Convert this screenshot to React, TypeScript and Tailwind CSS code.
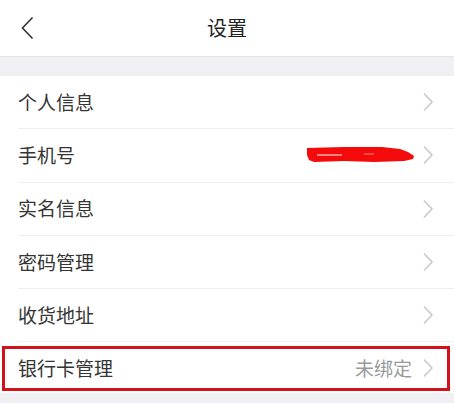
import { ReactNode } from "react";

const rows = ["个人信息", "手机号", "实名信息", "密码管理", "收货地址"];

function Chevron() {
  return (
    <svg width="12" height="20" viewBox="0 0 12 20" className="shrink-0">
      <path d="M2 1.5 L10 10 L2 18.5" fill="none" stroke="#c8c8cc" strokeWidth="1.5" />
    </svg>
  );
}

function Scribble() {
  return (
    <svg width="114" height="20" viewBox="0 0 114 20" className="shrink-0">
      <path
        d="M3 3 L40 2 L78 2 L96 4 L104 7 L110 11 L109 14 L100 16 L70 17 L40 16 L10 17 L5 15 L3 10 Z"
        fill="#f40a0a"
      />
      <path d="M13 10 L38 10" stroke="#fff" strokeWidth="1" />
      <path d="M60 9 L70 9" stroke="#f88" strokeWidth="1" />
    </svg>
  );
}

function Row({ label, right, last }: { label: string; right?: ReactNode; last?: boolean }) {
  return (
    <div className={`flex items-center pl-[18px] ${last ? "" : "h-[53.3px]"}`}>
      <div
        className={`flex h-full flex-1 items-center pr-[20px] ${
          last ? "" : "border-b border-[#efeff2]"
        }`}
      >
        <span className="flex-1 text-[19px] text-[#353535]">{label}</span>
        {right}
        <Chevron />
      </div>
    </div>
  );
}

export default function App() {
  return (
    <main
      className="h-[403px] w-[454px] overflow-hidden bg-[#f0eff4]"
      style={{ fontFamily: '"Noto Sans CJK SC", "Noto Sans", sans-serif' }}
    >
      <header className="relative flex h-[57px] items-center justify-center border-b border-[#e3e3e6] bg-white">
        <svg width="14" height="24" viewBox="0 0 14 24" className="absolute left-[20px] top-[16px]">
          <path d="M12.5 1.5 L2.5 12 L12.5 22.5" fill="none" stroke="#333" strokeWidth="1.6" />
        </svg>
        <h1 className="text-[20px] text-[#222]">设置</h1>
      </header>

      <div className="mt-[19px] bg-white">
        {rows.map((r) => (
          <Row
            key={r}
            label={r}
            right={r === "手机号" ? <div className="mr-[4px]"><Scribble /></div> : undefined}
          />
        ))}
        <div className="relative flex h-[51px] items-center pl-[18px] pr-[20px]">
          <span className="flex-1 text-[19px] text-[#353535]">银行卡管理</span>
          <span className="mr-[10px] text-[19px] text-[#9a9a9a]">未绑定</span>
          <Chevron />
          <div className="pointer-events-none absolute bottom-[2px] left-[2px] right-[4px] top-[4px] border-[3px] border-[#d2121b]" />
        </div>
      </div>
    </main>
  );
}
